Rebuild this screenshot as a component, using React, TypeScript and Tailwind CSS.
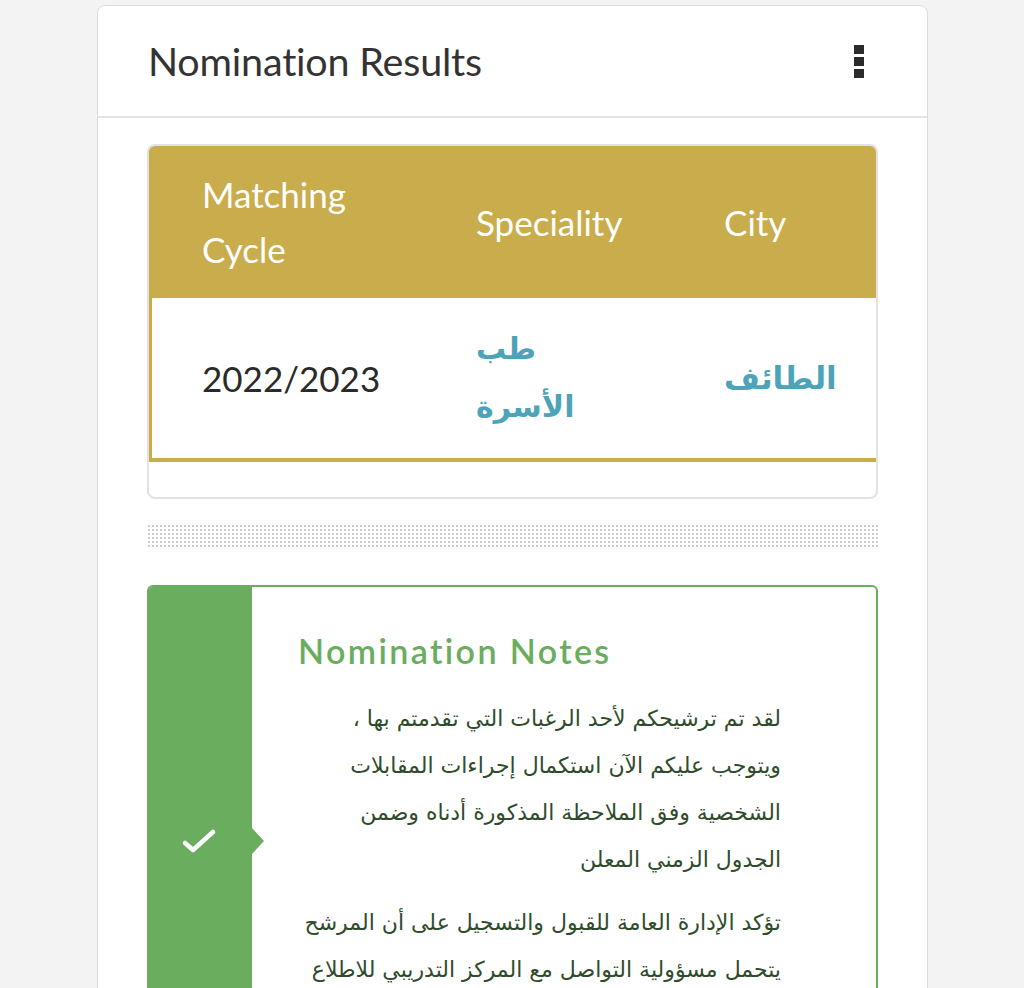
import React from "react";

// each paragraph is kept as its rendered lines so the wrap matches the page
const notes = [
  [
    "لقد تم ترشيحكم لأحد الرغبات التي تقدمتم بها ،",
    "ويتوجب عليكم الآن استكمال إجراءات المقابلات",
    "الشخصية وفق الملاحظة المذكورة أدناه وضمن",
    "الجدول الزمني المعلن",
  ],
  [
    "تؤكد الإدارة العامة للقبول والتسجيل على أن المرشح",
    "يتحمل مسؤولية التواصل مع المركز التدريبي للاطلاع",
    "على مواعيد المقابلات الشخصية",
  ],
];

function KebabIcon() {
  return (
    <div className="flex flex-col gap-[3px]">
      <span className="block w-[10px] h-[9px] bg-[#2b2b2b]" />
      <span className="block w-[10px] h-[9px] bg-[#2b2b2b]" />
      <span className="block w-[10px] h-[9px] bg-[#2b2b2b]" />
    </div>
  );
}

function ResultsTable() {
  return (
    <div className="rounded-lg border-2 border-[#e2e2e2] overflow-hidden bg-white">
      <div className="grid grid-cols-[274px_248px_1fr] bg-[#c9ac4b] text-white text-[35px] leading-[55px] h-[152px] items-center">
        <div className="pl-[53px]">
          Matching
          <br />
          Cycle
        </div>
        <div className="pl-[53px]">Speciality</div>
        <div className="pl-[53px]">City</div>
      </div>
      <div className="grid grid-cols-[271px_248px_1fr] items-center h-[164px] border-l-[3px] border-b-[4px] border-[#c9ac4b] bg-white">
        <div className="pl-[50px] text-[35px] text-[#2a2a2a]">2022/2023</div>
        <div
          className="pl-[53px] text-[30px] leading-[58px] font-bold text-[#4da4b8]"
          style={{ fontFamily: '"DejaVu Sans", sans-serif' }}
        >
          <div>طب</div>
          <div>الأسرة</div>
        </div>
        <div
          className="pl-[53px] text-[31px] font-bold text-[#4da4b8]"
          style={{ fontFamily: '"DejaVu Sans", sans-serif' }}
        >
          الطائف
        </div>
      </div>
      <div className="h-[35px]" />
    </div>
  );
}

function NotesCard() {
  return (
    <div className="flex rounded-md border-2 border-[#6aad5e] bg-white overflow-hidden min-h-[512px]">
      <div className="relative w-[103px] shrink-0 bg-[#6aad5e] flex items-center justify-center">
        <svg
          className="w-[38px] h-[30px] -ml-[2px]"
          viewBox="0 0 38 30"
          fill="none"
          stroke="white"
          strokeWidth={4.5}
          strokeLinecap="round"
          strokeLinejoin="round"
        >
          <path d="M4 17 L12 24 L32 6" />
        </svg>
        <span className="absolute -right-[12px] top-1/2 -translate-y-1/2 w-0 h-0 border-y-[13px] border-y-transparent border-l-[12px] border-l-[#6aad5e]" />
      </div>
      <div className="flex-1 min-w-0 pl-[46px] pr-[95px] pt-[42px]">
        <h2 className="text-[34px] leading-[44px] tracking-[2.4px] font-semibold text-[#6aad5e] mb-[22px]">
          Nomination Notes
        </h2>
        <div
          dir="rtl"
          className="text-[22px] leading-[47px] text-[#2f4b2c] space-y-[16px]"
          style={{ fontFamily: '"DejaVu Sans", sans-serif' }}
        >
          {notes.map((lines, i) => (
            <p key={i}>
              {lines.map((l, j) => (
                <span key={j} className="block whitespace-nowrap">
                  {l}
                </span>
              ))}
            </p>
          ))}
        </div>
      </div>
    </div>
  );
}

export default function App() {
  return (
    <div
      className="bg-[#f3f3f3] pt-[5px] overflow-hidden h-[988px]"
      style={{ fontFamily: 'Lato, "Liberation Sans", sans-serif' }}
    >
      <div className="ml-[97px] w-[831px] rounded-lg border border-[#dcdcdc] bg-white">
        <div className="h-[112px] flex items-center justify-between pl-[50px] pr-[63px] border-b-2 border-[#e4e4e4]">
          <h1 className="text-[39.5px] text-[#333] tracking-[-0.2px]">Nomination Results</h1>
          <KebabIcon />
        </div>
        <div className="px-[49px] pt-[26px] pb-10">
          <ResultsTable />
          <div className="mt-[25px] h-[25px] bg-[radial-gradient(#cdcdcd_1.1px,transparent_1.4px)] bg-size-[4px_4px]" />
          <div className="mt-[36px]">
            <NotesCard />
          </div>
        </div>
      </div>
    </div>
  );
}
